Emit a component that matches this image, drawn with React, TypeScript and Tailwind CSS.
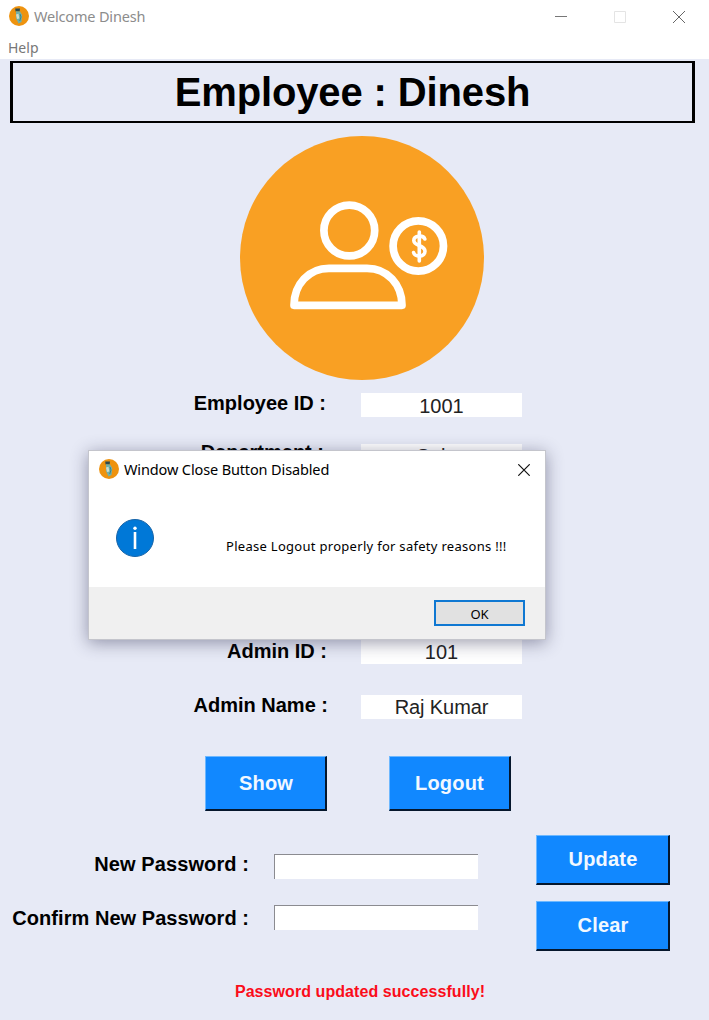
import type { ReactNode } from 'react';

function AppIcon() {
  return (
    <svg width="20" height="20" viewBox="0 0 20 20" className="block shrink-0">
      <circle cx="10" cy="10" r="10" fill="#ee930f" />
      <path d="M6.200 2.400h4.800l-.3 3H6.600z" fill="#2c4a50" />
      <path d="M7 5.200l4 .3 2.200 3.500-.7 7-3 1.400L7 12z" fill="#6fb0ab" />
      <path d="M7 8.500l2.500-.8.8 4.800-2.300.5z" fill="#d3dccb" />
      <path d="M11 8l1 3-1.300 4" stroke="#3d858b" fill="none" />
    </svg>
  );
}

function EmployeeBadge() {
  return (
    <svg width="244" height="244" viewBox="0 0 244 244" className="block">
      <circle cx="122" cy="122" r="122" fill="#f9a023" />
      <g fill="none" stroke="#fff" strokeLinejoin="round" strokeLinecap="round">
        <circle cx="109.300" cy="94.500" r="25.400" strokeWidth="7.700" />
        <circle cx="178.300" cy="110" r="25.200" strokeWidth="7.700" />
        <path d="M54 169.300C54 148 69 132.300 89 132.300H127C147 132.300 162 148 162 169.300Z" strokeWidth="7.700" />
        <path
          d="M184.800 103C183.500 99 173.800 99 173.800 104.500C173.800 110.500 185 108.500 185 115.200C185 121.500 174.300 121 173.600 116.500"
          strokeWidth="3.600"
        />
        <path d="M179.300 96V125" strokeWidth="3.600" />
      </g>
    </svg>
  );
}

function Field({ children, className }: { children: ReactNode; className: string }) {
  return (
    <div className={`h-6 w-[161px] bg-white text-center text-[20px] text-[#222] ${className}`}>{children}</div>
  );
}

function Label({ children, className }: { children: ReactNode; className: string }) {
  return <div className={`text-right text-[20px] leading-6 font-bold whitespace-nowrap ${className}`}>{children}</div>;
}

function Button({ children, className }: { children: ReactNode; className: string }) {
  return (
    <button
      className={`block border-t border-r-2 border-b-2 border-l border-t-[#6db8ff] border-r-[#06172c] border-b-[#06172c] border-l-[#6db8ff] bg-[#1188ff] text-[20px] leading-6 font-bold tracking-[0.2px] text-[#f2f8ff] ${className}`}
    >
      {children}
    </button>
  );
}

function Entry() {
  return <input className="block h-[25px] w-[204px] border-t border-l border-[#8b8b90] bg-white outline-none" />;
}

function Dialog() {
  return (
    <div className="absolute top-[450px] left-[88px] flex h-[190px] w-[458px] flex-col border border-[#c4c5cc] bg-white font-['Noto_Sans',sans-serif] text-black shadow-[0_3px_16px_rgba(40,40,75,0.45)]">
      <div className="flex h-[36px] items-center pr-[15px] pl-[10px]">
        <AppIcon />
        <span className="ml-[5px] text-[14.5px] leading-5 tracking-[-0.13px] whitespace-nowrap">
          Window Close Button Disabled
        </span>
        <svg width="12" height="12" viewBox="0 0 12 12" className="relative top-px ml-auto block" stroke="#111" strokeWidth="1.2">
          <path d="M.3 .3L11.700 11.700M11.700 .3L.3 11.700" />
        </svg>
      </div>
      <div className="flex h-[100px] items-start pl-[27px]">
        <svg width="38" height="38" viewBox="0 0 38 38" className="mt-[32px] block shrink-0">
          <circle cx="19" cy="19" r="18.500" fill="#0078d7" stroke="#1764a8" />
          <circle cx="19" cy="9.200" r="1.700" fill="#fff" />
          <path d="M19 13V30" stroke="#fff" strokeWidth="2.600" />
        </svg>
        <span className="mt-[49px] ml-[72px] text-[13px] leading-5 tracking-[0.29px] whitespace-nowrap">
          Please Logout properly for safety reasons !!!
        </span>
      </div>
      <div className="flex flex-1 items-start justify-end bg-[#f0f0f0] pt-[13px] pr-[20px]">
        <button className="h-[26px] w-[91px] border-2 border-[#0f78d2] bg-[#e1e1e1] pt-px text-[13px] leading-5">OK</button>
      </div>
    </div>
  );
}

export default function App() {
  return (
    <div className="relative flex h-[1020px] w-[709px] flex-col overflow-hidden bg-[#e7eaf6] font-['Liberation_Sans',Arial,sans-serif] text-black">
      <header className="h-[59px] shrink-0 bg-white font-['Noto_Sans',sans-serif]">
        <div className="flex h-[32px] items-center pl-[9px]">
          <AppIcon />
          <span className="ml-[5px] text-[14.5px] leading-5 tracking-[-0.18px] text-[#8c8c8c]">Welcome Dinesh</span>
          <div className="mr-[24px] ml-auto flex items-center gap-[47px]">
            <svg width="12" height="12" viewBox="0 0 12 12" stroke="#777">
              <path d="M0 6.500H12" />
            </svg>
            <svg width="12" height="12" viewBox="0 0 12 12" stroke="#e4e4e4" fill="none" className="relative top-px">
              <path d="M.5 .5H11.500V11.500H.5Z" />
            </svg>
            <svg width="12" height="12" viewBox="0 0 12 12" stroke="#666" className="relative top-px">
              <path d="M0 0L12 12M12 0L0 12" />
            </svg>
          </div>
        </div>
        <div className="pt-[6px] pl-[8px] text-[14px] leading-5 text-[#777]">Help</div>
      </header>

      <h1 className="mt-[2px] ml-[10px] h-[62px] w-[685px] shrink-0 border-x-3 border-y-2 border-black pt-[6px] text-center text-[40px] leading-[46px] font-bold tracking-[-0.13px]">
        Employee : Dinesh
      </h1>

      <div className="mt-[13px] ml-[240px]">
        <EmployeeBadge />
      </div>

      <div className="mt-[11px] flex h-[49px] items-start">
        <Label className="w-[326px]">Employee ID :</Label>
        <Field className="mt-[2px] ml-[35px] leading-[26px]">1001</Field>
      </div>
      <div className="flex h-[199px] items-start">
        <Label className="w-[324px]">Department :</Label>
        <Field className="mt-[4px] ml-[37px] leading-[24px]">Sales</Field>
      </div>
      <div className="flex h-[54px] items-start">
        <Label className="w-[327px]">Admin ID :</Label>
        <Field className="mt-[1px] ml-[34px] leading-[24px]">101</Field>
      </div>
      <div className="flex h-[63px] items-start">
        <Label className="w-[328px]">Admin Name :</Label>
        <Field className="mt-[2px] ml-[33px] leading-[25px] tracking-[-0.1px]">Raj Kumar</Field>
      </div>

      <div className="flex gap-[62px] pl-[205px]">
        <Button className="h-[55px] w-[122px] pl-px">Show</Button>
        <Button className="h-[55px] w-[122px]">Logout</Button>
      </div>

      <div className="mt-[24px] flex h-[117px] items-start">
        <div className="flex w-[249px] flex-col gap-[30px] pt-[17px]">
          <Label className="tracking-[0.1px]">New Password :</Label>
          <Label className="tracking-[0.05px]">Confirm New Password :</Label>
        </div>
        <div className="ml-[25px] flex flex-col gap-[26px] pt-[19px]">
          <Entry />
          <Entry />
        </div>
        <div className="ml-[58px] flex flex-col gap-[16px]">
          <Button className="h-[50px] w-[134px] pb-[2px] pl-px">Update</Button>
          <Button className="h-[50px] w-[134px] pb-[2px] pl-px">Clear</Button>
        </div>
      </div>

      <p className="mt-[30px] pl-[11px] text-center text-[16px] leading-5 font-bold tracking-[0.07px] text-[#fb0d1a]">
        Password updated successfully!
      </p>

      <Dialog />
    </div>
  );
}
